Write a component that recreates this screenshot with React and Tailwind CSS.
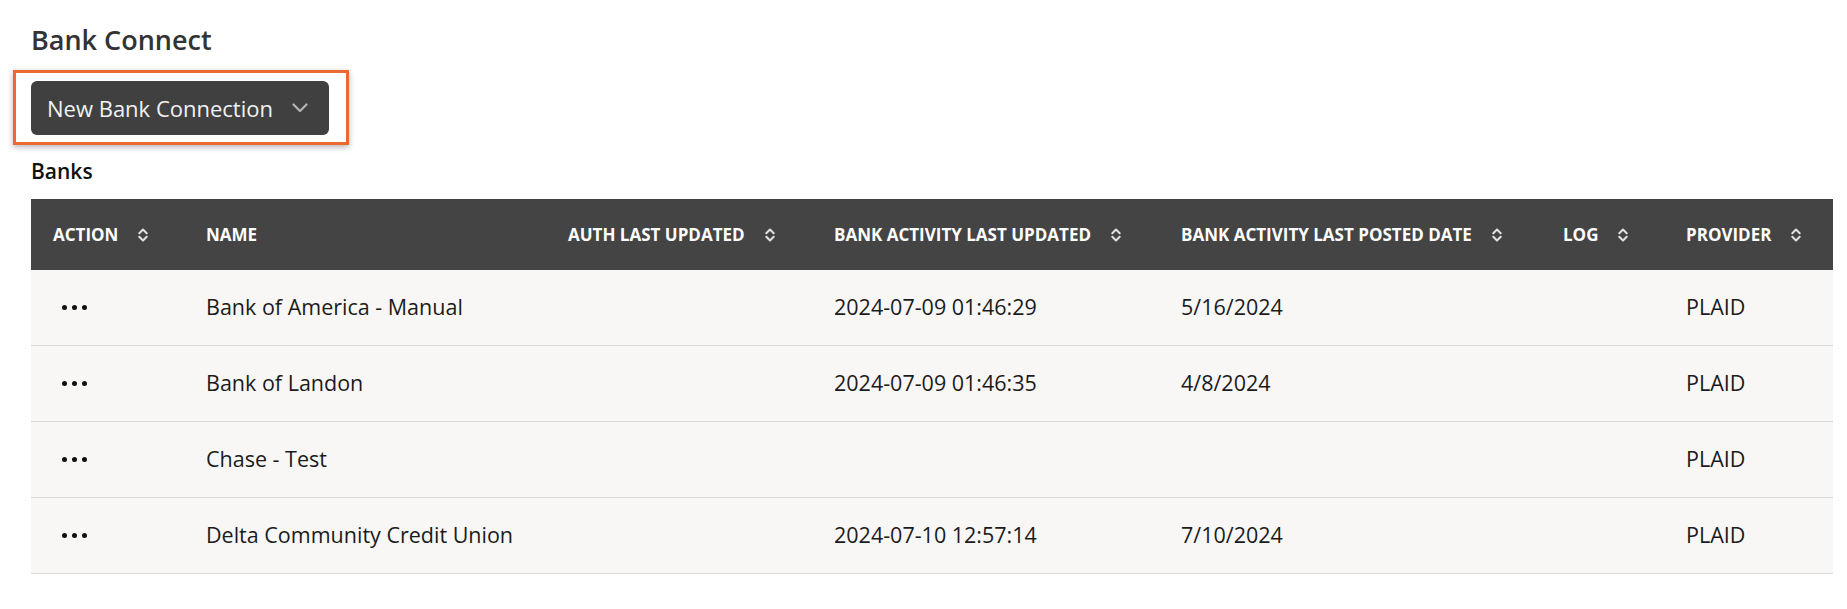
import React from "react";

const COLUMNS = [
  { key: "action", label: "Action", sortable: true },
  { key: "name", label: "Name", sortable: false },
  { key: "authUpdated", label: "Auth Last Updated", sortable: true },
  { key: "activityUpdated", label: "Bank Activity Last Updated", sortable: true },
  { key: "activityPosted", label: "Bank Activity Last Posted Date", sortable: true },
  { key: "log", label: "Log", sortable: true },
  { key: "provider", label: "Provider", sortable: true },
];

const BANKS = [
  { id: 1, name: "Bank of America - Manual", authUpdated: "", activityUpdated: "2024-07-09 01:46:29", activityPosted: "5/16/2024", log: "", provider: "PLAID" },
  { id: 2, name: "Bank of Landon", authUpdated: "", activityUpdated: "2024-07-09 01:46:35", activityPosted: "4/8/2024", log: "", provider: "PLAID" },
  { id: 3, name: "Chase - Test", authUpdated: "", activityUpdated: "", activityPosted: "", log: "", provider: "PLAID" },
  { id: 4, name: "Delta Community Credit Union", authUpdated: "", activityUpdated: "2024-07-10 12:57:14", activityPosted: "7/10/2024", log: "", provider: "PLAID" },
];

const GRID = "grid grid-cols-[153px_362px_266px_347px_382px_123px_169px]";

function SortIcon() {
  return (
    <svg width="10" height="14" viewBox="0 0 10 14" fill="none" className="ml-5 shrink-0 text-[#e2e2e2]">
      <path d="M1.3 5.2L5 1.5L8.7 5.2" stroke="currentColor" strokeWidth="2" strokeLinecap="round" strokeLinejoin="round" />
      <path d="M1.3 8.8L5 12.5L8.7 8.8" stroke="currentColor" strokeWidth="2" strokeLinecap="round" strokeLinejoin="round" />
    </svg>
  );
}

function RowMenu() {
  return (
    <button className="ml-[9px] flex items-center gap-[5px] h-6">
      <span className="w-[5px] h-[5px] rounded-full bg-[#111]" />
      <span className="w-[5px] h-[5px] rounded-full bg-[#111]" />
      <span className="w-[5px] h-[5px] rounded-full bg-[#111]" />
    </button>
  );
}

export default function App() {
  return (
    <div className="min-h-screen bg-white pl-[31px] pr-[14px] pt-[22px] font-['Open_Sans','Noto_Sans',sans-serif]">
      <h1 className="text-[27px] leading-[36px] font-semibold text-[#333]">Bank Connect</h1>

      <div className="-ml-[18px] mt-3 flex w-fit border-[3px] border-[#ec6a30] pl-[15px] pr-[17px] pt-2 pb-[7px] shadow-[0_2px_6px_rgba(0,0,0,0.3)]">
        <button className="h-[54px] w-[298px] rounded-md bg-[#404040] flex items-center pl-4 text-[22px] text-[#f2f2f2]">
          New Bank Connection
          <svg width="16" height="10" viewBox="0 0 16 10" fill="none" className="ml-[19px] text-[#b4b4b4]">
            <path d="M1.5 1.5L8 8L14.5 1.5" stroke="currentColor" strokeWidth="2.2" strokeLinecap="round" strokeLinejoin="round" />
          </svg>
        </button>
      </div>

      <h2 className="mt-3 text-[21px] leading-[28px] font-semibold text-[#111]">Banks</h2>

      <div className="mt-[14px]">
        <div className={`${GRID} h-[71px] items-center bg-[#444] text-white text-[17px] font-bold uppercase`}>
          {COLUMNS.map((c) => (
            <div key={c.key} className="flex items-center pl-[22px] whitespace-nowrap">
              {c.label}
              {c.sortable && <SortIcon />}
            </div>
          ))}
        </div>

        {BANKS.map((b) => (
          <div key={b.id} className={`${GRID} h-[76px] items-center border-b border-[#d9d9d9] bg-[#f8f7f5] text-[21.5px] text-[#1b1b1b]`}>
            <div className="pl-[22px]">
              <RowMenu />
            </div>
            <div className="pl-[22px] whitespace-nowrap">{b.name}</div>
            <div className="pl-[22px]">{b.authUpdated}</div>
            <div className="pl-[22px] whitespace-nowrap">{b.activityUpdated}</div>
            <div className="pl-[22px]">{b.activityPosted}</div>
            <div className="pl-[22px]">{b.log}</div>
            <div className="pl-[22px]">{b.provider}</div>
          </div>
        ))}
      </div>
    </div>
  );
}
